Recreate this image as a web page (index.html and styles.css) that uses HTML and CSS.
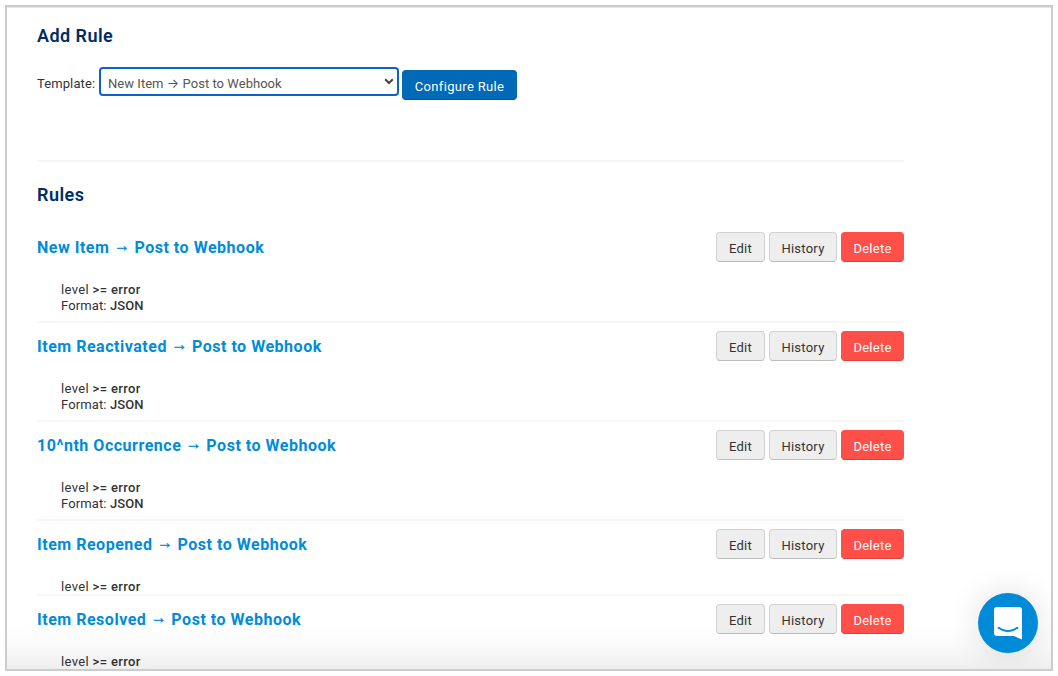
FILE: index.html
```html
<!DOCTYPE html>
<html lang="en">
<head>
<meta charset="utf-8">
<title>Rules</title>
<link rel="stylesheet" href="styles.css">
</head>
<body>
<main class="frame">
  <div class="content">
    <h2 class="section-title">Add Rule</h2>
    <form class="template-form">
      <label class="label" for="template">Template:</label>
      <div class="select" id="template"><span>New Item <span class="arrow">→</span> Post to Webhook</span>
        <svg class="chevron" viewBox="0 0 10 7"><path d="M1.2 1.2 5 5l3.8-3.8"/></svg>
      </div>
      <button class="btn primary" type="button">Configure Rule</button>
    </form>
    <h2 class="section-title rules-title">Rules</h2>
    <section class="rule">
      <div class="rule-head"><h3>New Item <span class="arrow">→</span> Post to Webhook</h3><div class="actions"><button class="btn edit">Edit</button><button class="btn history">History</button><button class="btn delete">Delete</button></div></div>
      <p class="details"><span>level <b>&gt;= error</b></span><span class="format">Format: <b>JSON</b></span></p>
    </section>
    <section class="rule">
      <div class="rule-head"><h3>Item Reactivated <span class="arrow">→</span> Post to Webhook</h3><div class="actions"><button class="btn edit">Edit</button><button class="btn history">History</button><button class="btn delete">Delete</button></div></div>
      <p class="details"><span>level <b>&gt;= error</b></span><span class="format">Format: <b>JSON</b></span></p>
    </section>
    <section class="rule">
      <div class="rule-head"><h3>10^nth Occurrence <span class="arrow">→</span> Post to Webhook</h3><div class="actions"><button class="btn edit">Edit</button><button class="btn history">History</button><button class="btn delete">Delete</button></div></div>
      <p class="details"><span>level <b>&gt;= error</b></span><span class="format">Format: <b>JSON</b></span></p>
    </section>
    <section class="rule short">
      <div class="rule-head"><h3>Item Reopened <span class="arrow">→</span> Post to Webhook</h3><div class="actions"><button class="btn edit">Edit</button><button class="btn history">History</button><button class="btn delete">Delete</button></div></div>
      <p class="details"><span>level <b>&gt;= error</b></span></p>
    </section>
    <section class="rule short">
      <div class="rule-head"><h3>Item Resolved <span class="arrow">→</span> Post to Webhook</h3><div class="actions"><button class="btn edit">Edit</button><button class="btn history">History</button><button class="btn delete">Delete</button></div></div>
      <p class="details"><span>level <b>&gt;= error</b></span></p>
    </section>
  </div>
  <div class="shade"></div>
  <div class="chat">
    <svg viewBox="0 0 28 33"><path fill="#fff" d="M3 0h22A3 3 0 0 1 28 3V32.500L20 29H3A3 3 0 0 1 0 26V3A3 3 0 0 1 3 0z"/><path class="smile" d="M4.600 20.800q9.400 7 18.800 0"/></svg>
  </div>
</main>
</body>
</html>
```
FILE: styles.css
```css
* { box-sizing: border-box; }
body {
  margin: 0;
  padding: 5px;
  height: 676px;
  overflow: hidden;
  background: #fff;
  font-family: Roboto, sans-serif;
  color: #333;
}
.frame {
  position: relative;
  width: 1048px;
  height: 666px;
  border: 2px solid #ccc;
  box-shadow: inset 0 1px #e6e6e6;
  overflow: hidden;
}
.content {
  width: 867px;
  margin-left: 30px;
  padding-top: 17px;
}
.section-title {
  margin: 0;
  font-size: 18px;
  line-height: 24px;
  font-weight: 600;
  letter-spacing: 0.45px;
  color: #002d65;
}
.template-form {
  display: flex;
  align-items: flex-start;
  height: 95px;
  margin-top: 19px;
  border-bottom: 2px solid #f6f6f6;
}
.label {
  width: 62px;
  padding-top: 8px;
  font-size: 13px;
  line-height: 18px;
  letter-spacing: 0.1px;
}
.select {
  display: flex;
  justify-content: space-between;
  align-items: center;
  width: 300px;
  height: 29px;
  padding: 3px 3px 0 7px;
  border: 2px solid #0b63ce;
  border-radius: 4px;
  font-size: 13px;
  letter-spacing: 0.04px;
  color: #555;
}
.chevron {
  width: 10px;
  height: 7px;
  margin-top: -3px;
  fill: none;
  stroke: #444;
  stroke-width: 2;
}
.arrow { font-family: Inter, sans-serif; letter-spacing: 0; }
.btn {
  height: 30px;
  padding: 2px 0 0;
  border: 1px solid #d2d2d2;
  border-bottom-color: #bdbdbd;
  border-radius: 4px;
  background: #eee;
  color: #333;
  font-family: Roboto, sans-serif;
  font-size: 13px;
  letter-spacing: 0.25px;
}
.primary {
  width: 115px;
  margin: 3px 0 0 3px;
  border-color: #0067b6;
  border-bottom-color: #00589e;
  background: #0069b8;
  color: #fff;
  letter-spacing: 0.33px;
}
.rules-title { margin-top: 21px; margin-bottom: 17px; }
.rule {
  height: 99px;
  padding-top: 8px;
  border-bottom: 2px solid #f6f6f6;
}
.short { height: 75px; }
.rule-head {
  display: flex;
  justify-content: space-between;
  height: 30px;
}
.rule h3 {
  margin: 0;
  height: 30px;
  font-size: 16px;
  line-height: 32px;
  font-weight: 700;
  letter-spacing: 0.52px;
  color: #008bdb;
}
.rule h3 .arrow {
  font-family: "Liberation Sans", sans-serif;
  font-weight: 400;
  line-height: 1;
  vertical-align: 2px;
  -webkit-text-stroke: 0.4px #008bdb;
}
.actions { display: flex; gap: 4px; }
.edit { width: 49px; }
.history { width: 68px; }
.delete {
  width: 63px;
  border-color: #fd4e48;
  border-bottom-color: #e2403b;
  background: #ff4f49;
  color: #fff;
}
.details {
  display: flex;
  flex-direction: column;
  margin: 20px 0 0 24px;
  font-size: 13px;
  line-height: 16px;
  letter-spacing: 0.35px;
}
.format { letter-spacing: 0.12px; }
.details b { font-weight: 500; }
.shade {
  position: absolute;
  inset: auto 0 0;
  height: 44px;
  background: linear-gradient(rgba(0,0,0,0), rgba(0,0,0,.02) 45%, rgba(0,0,0,.065));
}
.chat {
  position: absolute;
  left: 971px;
  top: 586px;
  display: flex;
  align-items: center;
  justify-content: center;
  width: 60px;
  height: 60px;
  border-radius: 50%;
  background: #008bd9;
  box-shadow: 0 0 32px rgba(0,0,0,.13);
}
.chat svg { width: 28px; height: 33px; }
.smile { fill: none; stroke: #008bd9; stroke-width: 2; stroke-linecap: round; }
```
